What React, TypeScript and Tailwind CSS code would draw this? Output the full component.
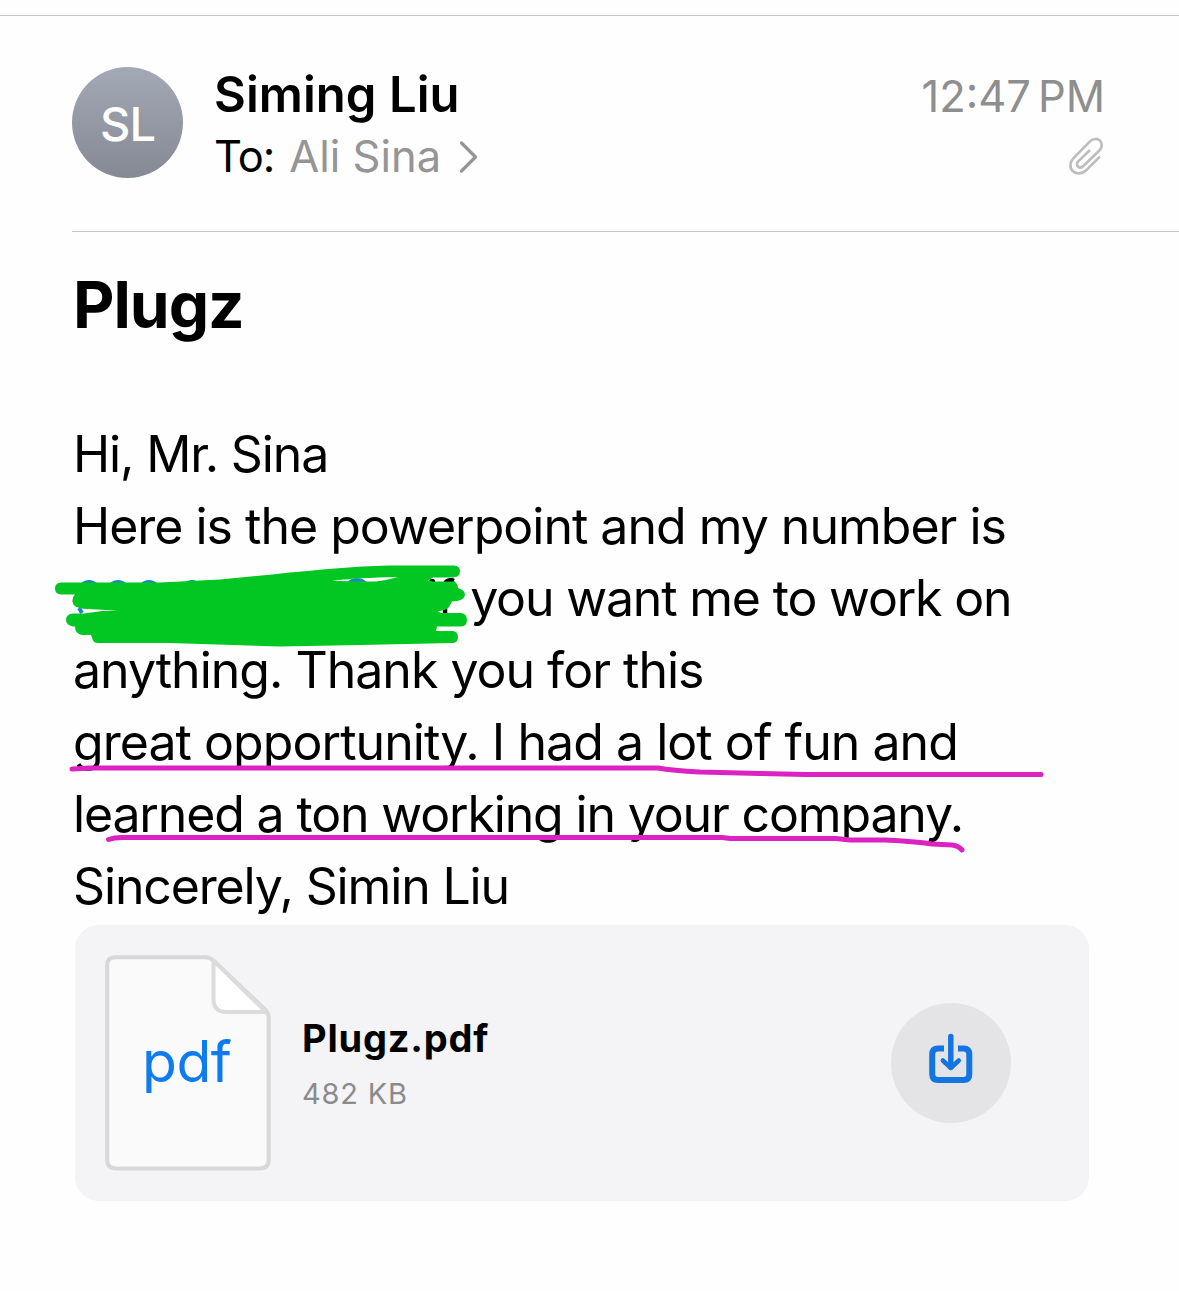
const PaperclipIcon = () => (
	<svg
		width="36"
		height="40"
		viewBox="0 0 36 40"
		fill="none"
		stroke="#bdbdbd"
		strokeWidth="2.6"
		strokeLinecap="round"
		strokeLinejoin="round"
	>
		<path d="M31.200 21.300 18.300 34.200c-4.200 4-10.200 4.200-13.600.8-3.300-3.400-3-9 .9-12.900L22.200 5.200c2.900-2.900 7.200-3 9.800-.5 2.500 2.600 2.300 6.700-.4 9.500L15.400 30c-1.900 1.800-4.100 1.900-5.500.5-1.400-1.400-1.200-3.600.6-5.400L21.300 14.800" />
	</svg>
);

const ChevronIcon = () => (
	<svg
		className="mt-px ml-[17px]"
		width="20"
		height="34"
		viewBox="0 0 20 34"
		fill="none"
		stroke="#959595"
		strokeWidth="3.2"
		strokeLinecap="round"
		strokeLinejoin="round"
	>
		<path d="M3.500 3 17.500 17 3.500 31" />
	</svg>
);

const PdfIcon = () => (
	<div className="relative h-[216px] w-[166px]">
		<svg width="166" height="216" viewBox="0 0 166 216" fill="none">
			<path
				d="M10 2.200H100.500Q105 2.200 108.500 5.500L159.500 54Q163.700 58 163.700 63V204.500Q163.700 213.500 155 213.500H11Q2.200 213.500 2.200 204.500V10.500Q2.200 2.200 10 2.200Z"
				fill="#fafafa"
				stroke="#d8d8d8"
				strokeWidth="4"
			/>
			<path
				d="M108.500 6V44Q108.500 57 121.500 57H161L109 6Z"
				fill="#fff"
				stroke="#dcdcdc"
				strokeWidth="4"
				strokeLinejoin="round"
			/>
		</svg>
		<span className="absolute top-[71px] left-[37px] text-[57px] leading-[71px] tracking-[-0.500px] text-[#0f7bf0]">
			pdf
		</span>
	</div>
);

const DownloadIcon = () => (
	<svg
		width="44"
		height="52"
		viewBox="0 0 44 52"
		fill="none"
		stroke="#1275e2"
		strokeLinejoin="round"
	>
		<path
			d="M15 15.500H9Q3.200 15.500 3.200 21.500V41Q3.200 47 9 47H34.500Q40.300 47 40.300 41V21.500Q40.300 15.500 34.500 15.500H29"
			strokeWidth="6"
		/>
		<path d="M21.800 3.500V34" strokeWidth="5.500" strokeLinecap="round" />
		<path d="M13.800 27.500 21.800 35 29.800 27.500" strokeWidth="4.500" strokeLinecap="round" />
	</svg>
);

const Scribble = () => (
	<svg
		className="absolute -top-[6px] -left-[23px]"
		width="424"
		height="100"
		viewBox="50 556 424 100"
		fill="none"
	>
		<g stroke="#1a86c8" strokeWidth="4">
			<path d="M79 592a10 10 0 0 1 20 0M108 592a10 10 0 0 1 20 0M139 592a10 10 0 0 1 20 0M182 592a10 10 0 0 1 20 0M346 590a11 10 0 0 1 22 0" />
			<path d="M79 608 82 613" />
		</g>
		{/* the last subpaths are the gaps left between strokes */}
		<path
			fillRule="evenodd"
			d="M61 582.500H160L220 579.500C280 574 340 566.500 390 565.500H454Q460 566 460 571Q460 577 454 577L454 581Q458 584 458 588Q465 590 465 595Q464 601 452 601.500L449 607V613H461Q467 614 467 620Q467 626 461 626.500H437L436 631H453Q458 632 458 637Q458 642.500 453 643L360 645L280 646.500L170 643H98Q93 643 92 637.500L91 635H82Q75 634 75 626.500H73Q66 625 66 620Q66 614 73 613.500H84L102 611L118 610.500L86 609Q73 608 72.500 602Q72 597 75 594.500H61Q55 594 55 588.500Q55 583 61 582.500Z
			M332 580.800Q356 577.800 398 577Q386 580.500 376 581.500Q350 581.700 332 580.800Z
			M428 580.500 433 577.500H454V581.500H434Z
			M438 611.500 446 609.500 449 607V613H441Z"
			fill="#02c622"
		/>
	</svg>
);

const Underlines = () => (
	<svg
		className="pointer-events-none absolute top-[344px] -left-[23px]"
		width="1020"
		height="98"
		viewBox="50 762 1020 98"
		fill="none"
		stroke="#dc22c0"
		strokeWidth="5"
		strokeLinecap="round"
		strokeLinejoin="round"
	>
		<path d="M72 769 90 768H658Q672 770.500 700 772L760 773.500 805 774.500H1041" />
		<path d="M108.500 839.500Q114 837.500 122 837.500H722L730 838.500H836L850 840H885Q915 841.500 932 844L952 845Q958 845.500 962 850" />
	</svg>
);

export default function App() {
	return (
		<main className="h-[1291px] w-[1179px] overflow-hidden bg-[#fefefe] pt-[15px] font-['Inter',sans-serif] text-black">
			<div className="border-t border-[#c6c6c8]">
				<header className="ml-[72px] flex h-[216px] border-b border-[#c8c8ca] pt-12 pr-[75px]">
					<div className="mt-[3px] flex size-[111px] shrink-0 items-center justify-center rounded-full bg-linear-to-b from-[#a3a9b5] to-[#858994] pt-[3px] text-[47px] font-medium tracking-[-1px] text-white">
						SL
					</div>
					<div className="ml-[31px] flex-1">
						<h2 className="pt-px text-[49px] leading-[60px] font-semibold tracking-[0.050px]">
							Siming Liu
						</h2>
						<div className="mt-px flex items-center text-[43.500px] leading-[60px]">
							<span className="tracking-[-1px]">To:</span>
							<span className="ml-[15px] text-[#959595]">Ali Sina</span>
							<ChevronIcon />
						</div>
					</div>
					<div className="flex flex-col items-end text-[#8e8e8e]">
						<time className="-mr-px flex gap-[7px] text-[43.500px] leading-[65px]">
							<span>12:47</span>
							<span>PM</span>
						</time>
						<div className="mt-[7px]">
							<PaperclipIcon />
						</div>
					</div>
				</header>
			</div>

			<section className="px-[73px]">
				<h1 className="pt-[35px] text-[64px] leading-[76px] font-bold tracking-[-1px]">Plugz</h1>

				<div className="relative mt-[75px] text-[50px] leading-[72px] whitespace-nowrap">
					<p className="tracking-[-1.150px]">Hi, Mr. Sina</p>
					<p className="tracking-[-1px]">Here is the powerpoint and my number is</p>
					<div className="relative pl-[356px] tracking-[-1.180px]">
						<span className="mr-[3px] -ml-[3px]">if</span> you want me to work on
						<Scribble />
					</div>
					<p className="tracking-[-1px]">anything. Thank you for this</p>
					<p className="tracking-[-0.950px]">great opportunity. I had a lot of fun and</p>
					<p className="tracking-[-1.150px]">learned a ton working in your company.</p>
					<p className="tracking-[-1.150px]">Sincerely, Simin Liu</p>
					<Underlines />
				</div>

				<div className="mt-[3px] ml-[2px] flex h-[276px] w-[1014px] items-center rounded-[24px] bg-[#f4f4f6] pr-[78px] pl-[30px]">
					<PdfIcon />
					<div className="ml-[31px] flex-1 pt-[3px]">
						<p className="text-[38px] leading-[50px] font-bold tracking-[0.800px]">Plugz.pdf</p>
						<p className="mt-2 text-[29px] leading-[46px] tracking-[0.800px] text-[#8b8b8d]">482 KB</p>
					</div>
					<button className="flex size-[120px] items-center justify-center rounded-full bg-[#e4e4e7] pb-2">
						<DownloadIcon />
					</button>
				</div>
			</section>
		</main>
	);
}
